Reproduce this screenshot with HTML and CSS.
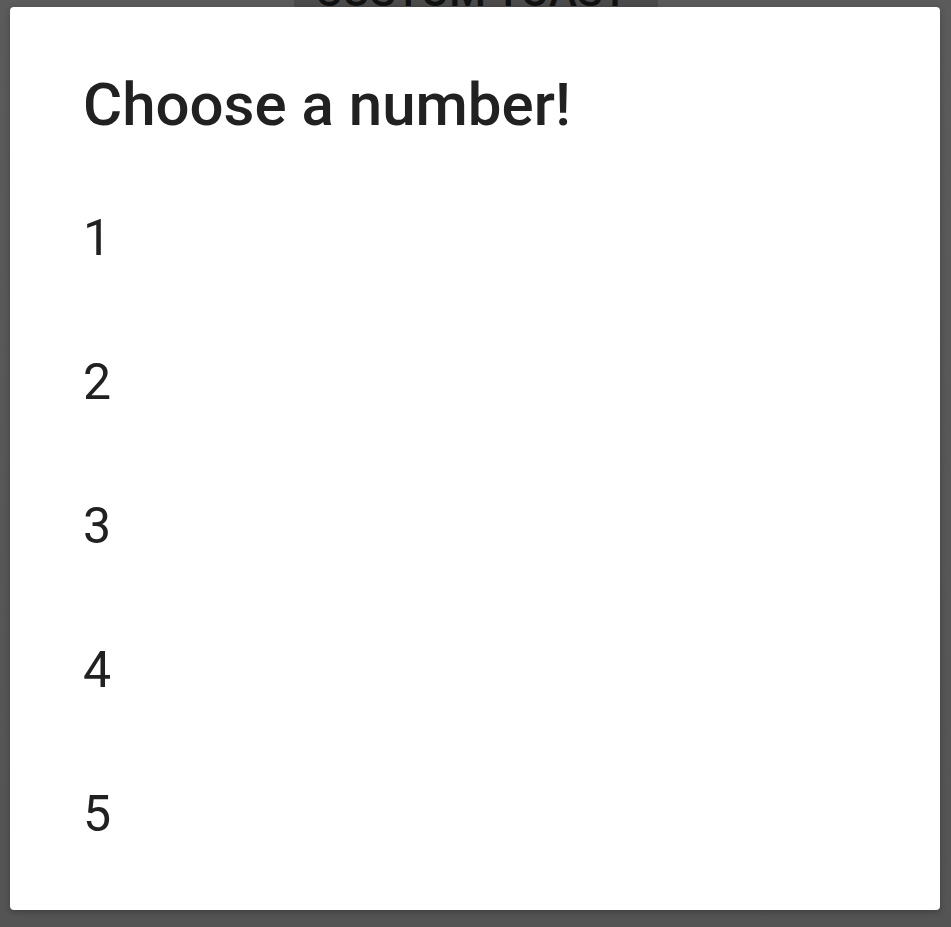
FILE: index.html
```html
<!DOCTYPE html>
<html>
<head>
<meta charset="utf-8">
<link rel="stylesheet" href="styles.css">
</head>
<body>
<div class="screen">
  <div class="behind">
    <div class="toast-btn"><span>CUSTOM TOAST</span></div>
  </div>
  <div class="dialog">
    <h1 class="title">Choose a number!</h1>
    <ul class="options">
      <li class="option">1</li>
      <li class="option">2</li>
      <li class="option">3</li>
      <li class="option">4</li>
      <li class="option">5</li>
    </ul>
  </div>
</div>
</body>
</html>
```
FILE: styles.css
```css
html, body {
  margin: 0;
  padding: 0;
  height: 100%;
}
body {
  background: #585858;
  font-family: Roboto, "Noto Sans", sans-serif;
  overflow: hidden;
}
.screen {
  position: relative;
  width: 951px;
  height: 927px;
  background: linear-gradient(#5b5b5b, #545454);
}
.behind {
  display: flex;
  justify-content: center;
}
.toast-btn {
  margin-top: -67px;
  width: 364px;
  height: 80px;
  border-radius: 4px;
  background: #4b4b4b;
  color: #111;
  font-size: 42px;
  font-weight: 500;
  display: flex;
  align-items: flex-end;
  justify-content: center;
  line-height: 1;
  padding-right: 8px;
  box-sizing: border-box;
}
.dialog {
  position: absolute;
  left: 10px;
  top: 7px;
  width: 930px;
  height: 903px;
  background: #fff;
  border-radius: 4px;
  box-sizing: border-box;
  padding: 62px 0 0 73px;
  box-shadow: 0 2px 6px rgba(0,0,0,0.25);
}
.title {
  margin: 0;
  font-size: 60px;
  font-weight: 500;
  color: #212121;
  line-height: 72px;
}
.options {
  list-style: none;
  margin: 78px 0 0;
  padding: 0;
}
.option {
  height: 144px;
  line-height: 144px;
  font-size: 50px;
  color: #212121;
  margin-top: -53px;
  margin-bottom: 53px;
}
```
